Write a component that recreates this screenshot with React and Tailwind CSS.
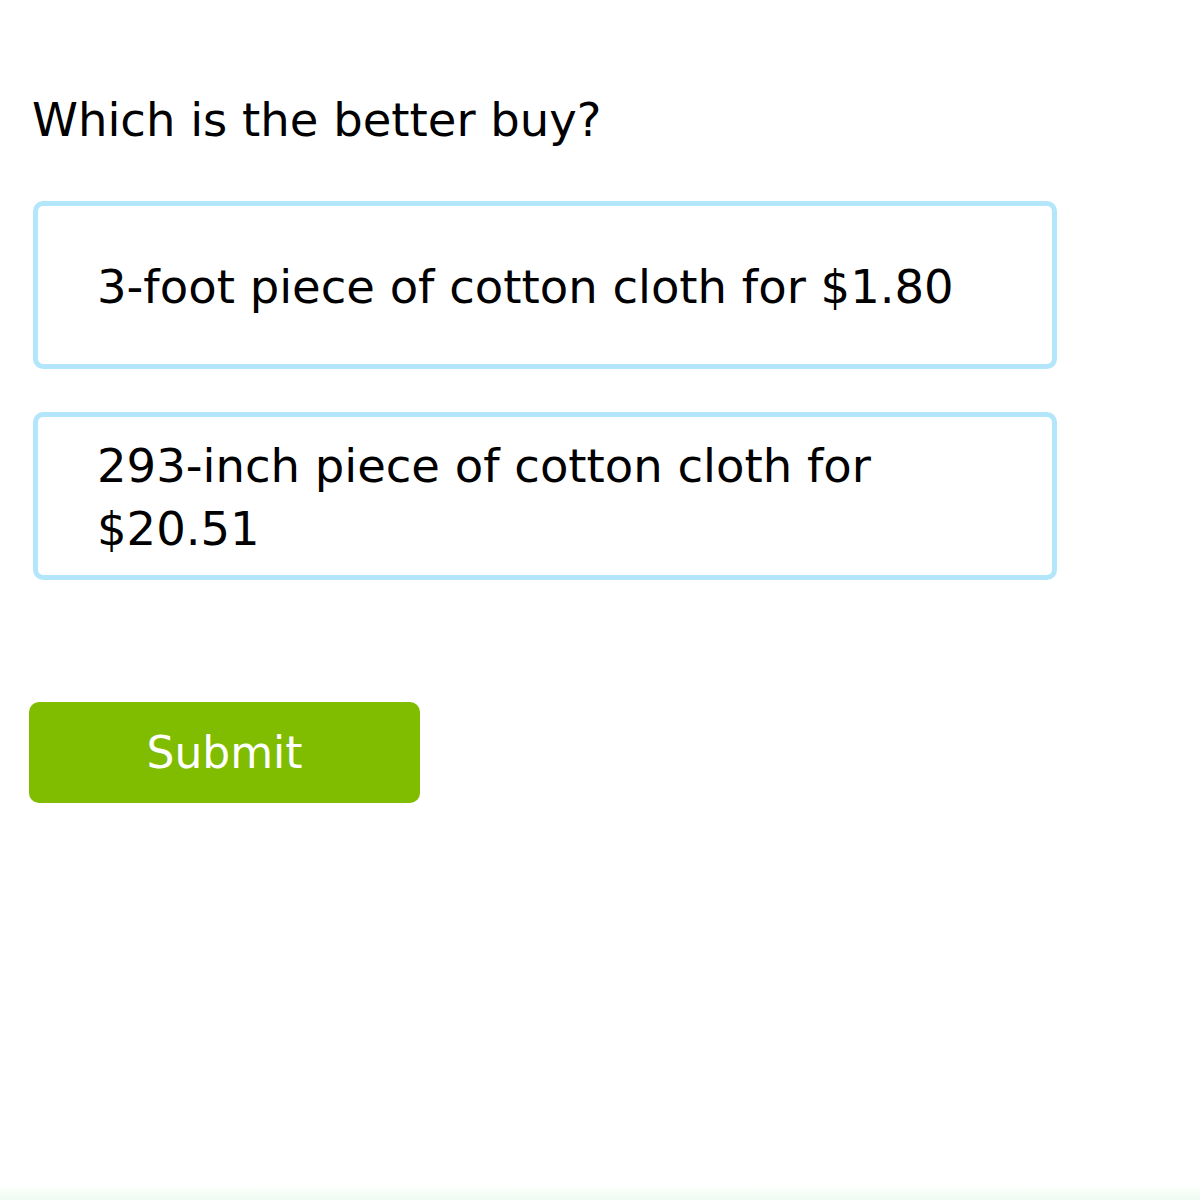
export default function App() {

    const choices = [
        "3-foot piece of cotton cloth for $1.80",
        "293-inch piece of cotton cloth for $20.51",
    ];

    return (

        <div className="relative w-[1200px] h-[1200px] bg-white overflow-hidden text-black font-['DejaVu_Sans',sans-serif]">

            {/* Question */}

            <div className="pt-[88px] pl-[32px]">

                <h1 className="text-[46.5px] leading-[64px] font-normal">
                    Which is the better buy?
                </h1>

            </div>

            {/* Choices */}

            <div className="mt-[49px] ml-[33px] w-[1024px] flex flex-col gap-[43px]">

                {choices.map((choice) => (

                    <div
                        key={choice}
                        className="
                            h-[168px]
                            rounded-[10px]
                            border-[5px]
                            border-[#b3e6fa]
                            flex
                            items-center
                            pl-[59px]
                            pr-[55px]
                        "
                    >

                        <p className="text-[46.5px] leading-[63px] pt-[4px]">
                            {choice}
                        </p>

                    </div>

                ))}

            </div>

            {/* Submit */}

            <div className="mt-[122px] ml-[29px]">

                <button
                    className="
                        w-[391px]
                        h-[101px]
                        rounded-[10px]
                        bg-[#80bc00]
                        text-white
                        text-[44px]
                    "
                >
                    Submit
                </button>

            </div>

            <div className="absolute bottom-0 left-0 right-0 h-[16px] bg-gradient-to-b from-white to-[#effcf3]" />

        </div>

    );

}
